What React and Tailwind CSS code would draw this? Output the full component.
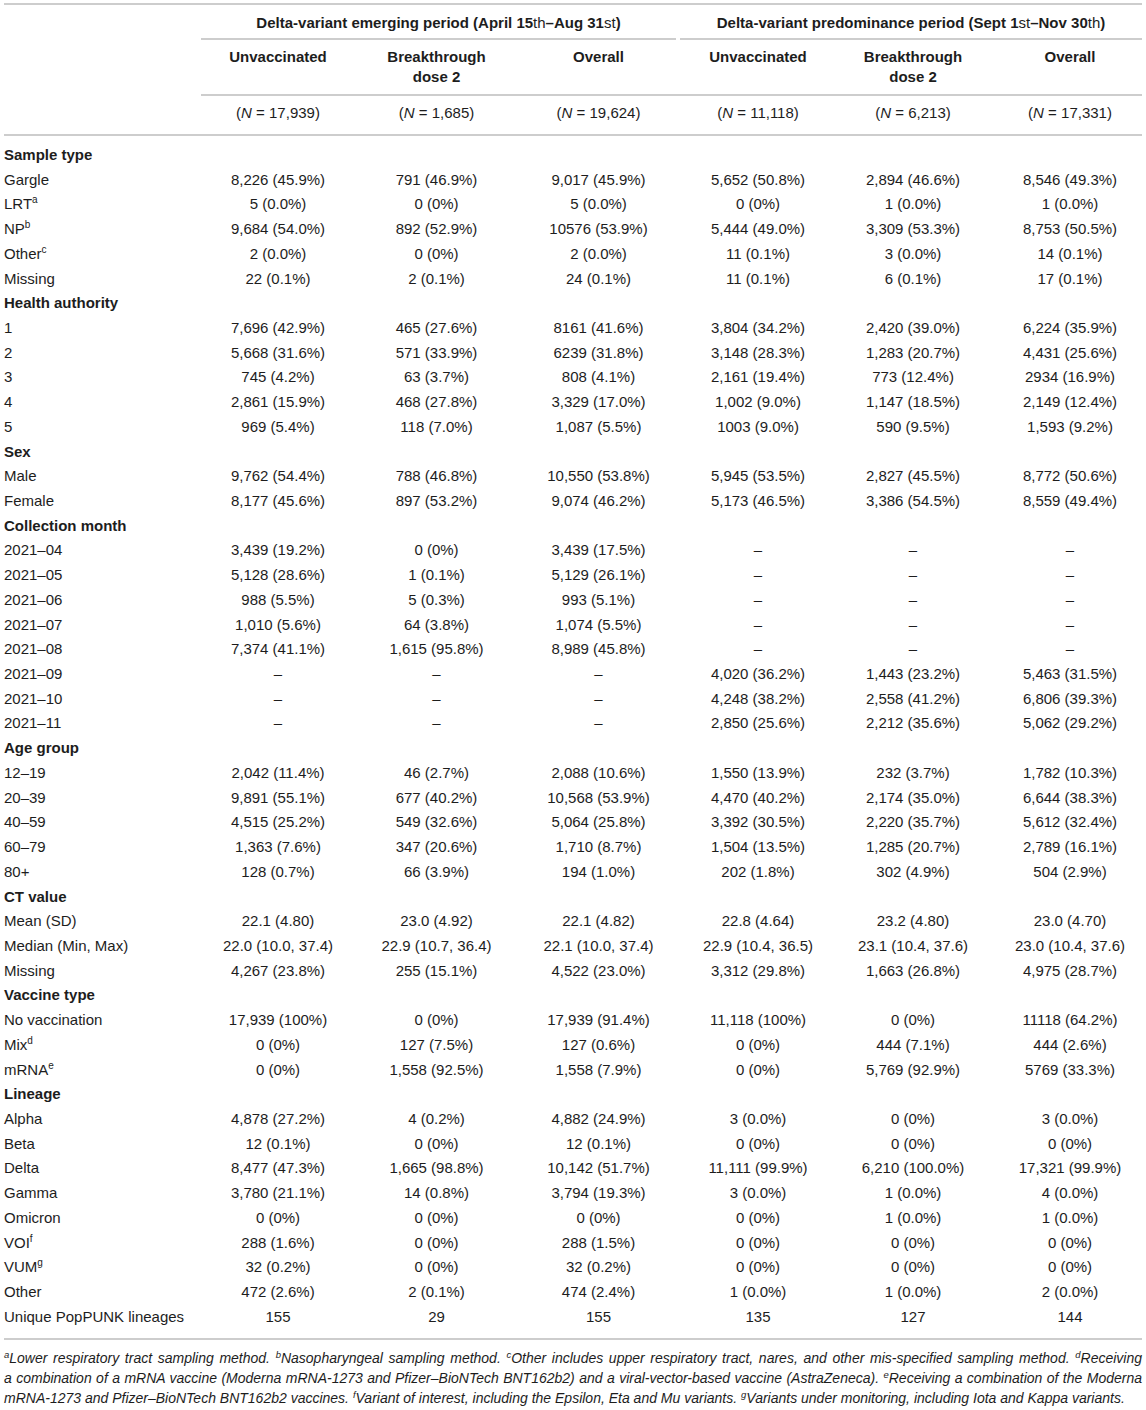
const font = { fontFamily: '"Liberation Sans", Arial, sans-serif' };

const D = "–";

const sections = [
  {
    title: "Sample type",
    rows: [
      ["Gargle", null, "8,226 (45.9%)", "791 (46.9%)", "9,017 (45.9%)", "5,652 (50.8%)", "2,894 (46.6%)", "8,546 (49.3%)"],
      ["LRT", "a", "5 (0.0%)", "0 (0%)", "5 (0.0%)", "0 (0%)", "1 (0.0%)", "1 (0.0%)"],
      ["NP", "b", "9,684 (54.0%)", "892 (52.9%)", "10576 (53.9%)", "5,444 (49.0%)", "3,309 (53.3%)", "8,753 (50.5%)"],
      ["Other", "c", "2 (0.0%)", "0 (0%)", "2 (0.0%)", "11 (0.1%)", "3 (0.0%)", "14 (0.1%)"],
      ["Missing", null, "22 (0.1%)", "2 (0.1%)", "24 (0.1%)", "11 (0.1%)", "6 (0.1%)", "17 (0.1%)"],
    ],
  },
  {
    title: "Health authority",
    rows: [
      ["1", null, "7,696 (42.9%)", "465 (27.6%)", "8161 (41.6%)", "3,804 (34.2%)", "2,420 (39.0%)", "6,224 (35.9%)"],
      ["2", null, "5,668 (31.6%)", "571 (33.9%)", "6239 (31.8%)", "3,148 (28.3%)", "1,283 (20.7%)", "4,431 (25.6%)"],
      ["3", null, "745 (4.2%)", "63 (3.7%)", "808 (4.1%)", "2,161 (19.4%)", "773 (12.4%)", "2934 (16.9%)"],
      ["4", null, "2,861 (15.9%)", "468 (27.8%)", "3,329 (17.0%)", "1,002 (9.0%)", "1,147 (18.5%)", "2,149 (12.4%)"],
      ["5", null, "969 (5.4%)", "118 (7.0%)", "1,087 (5.5%)", "1003 (9.0%)", "590 (9.5%)", "1,593 (9.2%)"],
    ],
  },
  {
    title: "Sex",
    rows: [
      ["Male", null, "9,762 (54.4%)", "788 (46.8%)", "10,550 (53.8%)", "5,945 (53.5%)", "2,827 (45.5%)", "8,772 (50.6%)"],
      ["Female", null, "8,177 (45.6%)", "897 (53.2%)", "9,074 (46.2%)", "5,173 (46.5%)", "3,386 (54.5%)", "8,559 (49.4%)"],
    ],
  },
  {
    title: "Collection month",
    rows: [
      ["2021–04", null, "3,439 (19.2%)", "0 (0%)", "3,439 (17.5%)", D, D, D],
      ["2021–05", null, "5,128 (28.6%)", "1 (0.1%)", "5,129 (26.1%)", D, D, D],
      ["2021–06", null, "988 (5.5%)", "5 (0.3%)", "993 (5.1%)", D, D, D],
      ["2021–07", null, "1,010 (5.6%)", "64 (3.8%)", "1,074 (5.5%)", D, D, D],
      ["2021–08", null, "7,374 (41.1%)", "1,615 (95.8%)", "8,989 (45.8%)", D, D, D],
      ["2021–09", null, D, D, D, "4,020 (36.2%)", "1,443 (23.2%)", "5,463 (31.5%)"],
      ["2021–10", null, D, D, D, "4,248 (38.2%)", "2,558 (41.2%)", "6,806 (39.3%)"],
      ["2021–11", null, D, D, D, "2,850 (25.6%)", "2,212 (35.6%)", "5,062 (29.2%)"],
    ],
  },
  {
    title: "Age group",
    rows: [
      ["12–19", null, "2,042 (11.4%)", "46 (2.7%)", "2,088 (10.6%)", "1,550 (13.9%)", "232 (3.7%)", "1,782 (10.3%)"],
      ["20–39", null, "9,891 (55.1%)", "677 (40.2%)", "10,568 (53.9%)", "4,470 (40.2%)", "2,174 (35.0%)", "6,644 (38.3%)"],
      ["40–59", null, "4,515 (25.2%)", "549 (32.6%)", "5,064 (25.8%)", "3,392 (30.5%)", "2,220 (35.7%)", "5,612 (32.4%)"],
      ["60–79", null, "1,363 (7.6%)", "347 (20.6%)", "1,710 (8.7%)", "1,504 (13.5%)", "1,285 (20.7%)", "2,789 (16.1%)"],
      ["80+", null, "128 (0.7%)", "66 (3.9%)", "194 (1.0%)", "202 (1.8%)", "302 (4.9%)", "504 (2.9%)"],
    ],
  },
  {
    title: "CT value",
    rows: [
      ["Mean (SD)", null, "22.1 (4.80)", "23.0 (4.92)", "22.1 (4.82)", "22.8 (4.64)", "23.2 (4.80)", "23.0 (4.70)"],
      ["Median (Min, Max)", null, "22.0 (10.0, 37.4)", "22.9 (10.7, 36.4)", "22.1 (10.0, 37.4)", "22.9 (10.4, 36.5)", "23.1 (10.4, 37.6)", "23.0 (10.4, 37.6)"],
      ["Missing", null, "4,267 (23.8%)", "255 (15.1%)", "4,522 (23.0%)", "3,312 (29.8%)", "1,663 (26.8%)", "4,975 (28.7%)"],
    ],
  },
  {
    title: "Vaccine type",
    rows: [
      ["No vaccination", null, "17,939 (100%)", "0 (0%)", "17,939 (91.4%)", "11,118 (100%)", "0 (0%)", "11118 (64.2%)"],
      ["Mix", "d", "0 (0%)", "127 (7.5%)", "127 (0.6%)", "0 (0%)", "444 (7.1%)", "444 (2.6%)"],
      ["mRNA", "e", "0 (0%)", "1,558 (92.5%)", "1,558 (7.9%)", "0 (0%)", "5,769 (92.9%)", "5769 (33.3%)"],
    ],
  },
  {
    title: "Lineage",
    rows: [
      ["Alpha", null, "4,878 (27.2%)", "4 (0.2%)", "4,882 (24.9%)", "3 (0.0%)", "0 (0%)", "3 (0.0%)"],
      ["Beta", null, "12 (0.1%)", "0 (0%)", "12 (0.1%)", "0 (0%)", "0 (0%)", "0 (0%)"],
      ["Delta", null, "8,477 (47.3%)", "1,665 (98.8%)", "10,142 (51.7%)", "11,111 (99.9%)", "6,210 (100.0%)", "17,321 (99.9%)"],
      ["Gamma", null, "3,780 (21.1%)", "14 (0.8%)", "3,794 (19.3%)", "3 (0.0%)", "1 (0.0%)", "4 (0.0%)"],
      ["Omicron", null, "0 (0%)", "0 (0%)", "0 (0%)", "0 (0%)", "1 (0.0%)", "1 (0.0%)"],
      ["VOI", "f", "288 (1.6%)", "0 (0%)", "288 (1.5%)", "0 (0%)", "0 (0%)", "0 (0%)"],
      ["VUM", "g", "32 (0.2%)", "0 (0%)", "32 (0.2%)", "0 (0%)", "0 (0%)", "0 (0%)"],
      ["Other", null, "472 (2.6%)", "2 (0.1%)", "474 (2.4%)", "1 (0.0%)", "1 (0.0%)", "2 (0.0%)"],
      ["Unique PopPUNK lineages", null, "155", "29", "155", "135", "127", "144"],
    ],
  },
];

const nCounts = ["17,939", "1,685", "19,624", "11,118", "6,213", "17,331"];
const heads = [["Unvaccinated"], ["Breakthrough", "dose 2"], ["Overall"], ["Unvaccinated"], ["Breakthrough", "dose 2"], ["Overall"]];

// last column sits a bit right of its cell centre in the original
const cellPad = (i) => (i === 5 ? "pl-[9px]" : "");

function Sup({ children, small }) {
  return (
    <sup className={small ? "text-[9.5px] relative -top-[5px]" : "text-[10px] relative -top-[6px]"}>{children}</sup>
  );
}

export default function App() {
  return (
    <div className="bg-white text-[#1d1d1d] text-[15px] w-[1146px] min-h-[1410px] pt-[3px]" style={font}>
      <table className="table-fixed ml-[4px] w-[1138px] border-collapse border-t-2 border-[#cdcdcd]">
        <colgroup>
          <col className="w-[197px]" />
          <col className="w-[154px]" />
          <col className="w-[163px]" />
          <col className="w-[161px]" />
          <col className="w-[158px]" />
          <col className="w-[152px]" />
          <col className="w-[153px]" />
        </colgroup>
        <thead>
          <tr>
            <th></th>
            <th colSpan={3} className="p-0 pr-[3px] align-bottom">
              <div className="pt-[8px] pb-[5px] leading-[20px] font-bold border-b-2 border-[#cdcdcd]">
                Delta-variant emerging period (April 15<span className="font-normal">th</span>–Aug 31<span className="font-normal">st</span>)
              </div>
            </th>
            <th colSpan={3} className="p-0 pl-[1px] align-bottom">
              <div className="pt-[8px] pb-[5px] leading-[20px] font-bold border-b-2 border-[#cdcdcd]">
                Delta-variant predominance period (Sept 1<span className="font-normal">st</span>–Nov 30<span className="font-normal">th</span>)
              </div>
            </th>
          </tr>
          <tr>
            <th></th>
            {heads.map((h, i) => (
              <th key={i} className={`px-0 pt-[7px] pb-[6px] leading-[20px] h-[55px] align-top font-bold border-b-2 border-[#cdcdcd] ${cellPad(i)}`}>
                {h.map((l, j) => (
                  <div key={j}>{l}</div>
                ))}
              </th>
            ))}
          </tr>
          <tr className="border-b-2 border-[#cdcdcd]">
            <th></th>
            {nCounts.map((n, i) => (
              <th key={i} className={`px-0 pt-[7px] pb-[11px] leading-[20px] font-normal ${cellPad(i)}`}>
                (<i>N</i> = {n})
              </th>
            ))}
          </tr>
        </thead>
        <tbody className="border-b-2 border-[#cdcdcd]">
          <tr>
            <td colSpan={7} className="h-[7.6px] p-0"></td>
          </tr>
          {sections.map((s) => (
            <Section key={s.title} s={s} />
          ))}
          <tr>
            <td colSpan={7} className="h-[9.6px] p-0"></td>
          </tr>
        </tbody>
      </table>
      <div className="ml-[4px] w-[1138px] pt-[8px] text-[14px] leading-[20px] italic">
        <p className="text-justify [text-align-last:justify]">
          <Sup small>a</Sup>Lower respiratory tract sampling method. <Sup small>b</Sup>Nasopharyngeal sampling method. <Sup small>c</Sup>Other includes upper respiratory tract, nares, and other mis-specified sampling method. <Sup small>d</Sup>Receiving
        </p>
        <p className="text-justify [text-align-last:justify]">
          a combination of a mRNA vaccine (Moderna mRNA-1273 and Pfizer–BioNTech BNT162b2) and a viral-vector-based vaccine (AstraZeneca). <Sup small>e</Sup>Receiving a combination of the Moderna
        </p>
        <p>
          mRNA-1273 and Pfizer–BioNTech BNT162b2 vaccines. <Sup small>f</Sup>Variant of interest, including the Epsilon, Eta and Mu variants. <Sup small>g</Sup>Variants under monitoring, including Iota and Kappa variants.
        </p>
      </div>
    </div>
  );
}

function Section({ s }) {
  return (
    <>
      <tr className="h-[24.72px]">
        <td colSpan={7} className="p-0 leading-[20px] font-bold">
          {s.title}
        </td>
      </tr>
      {s.rows.map((r, idx) => (
        <tr key={idx} className="h-[24.72px]">
          <td className="p-0 leading-[20px] whitespace-nowrap">
            {r[0]}
            {r[1] && <Sup>{r[1]}</Sup>}
          </td>
          {r.slice(2).map((v, i) => (
            <td key={i} className={`p-0 leading-[20px] text-center whitespace-nowrap ${cellPad(i)}`}>
              {v}
            </td>
          ))}
        </tr>
      ))}
    </>
  );
}
